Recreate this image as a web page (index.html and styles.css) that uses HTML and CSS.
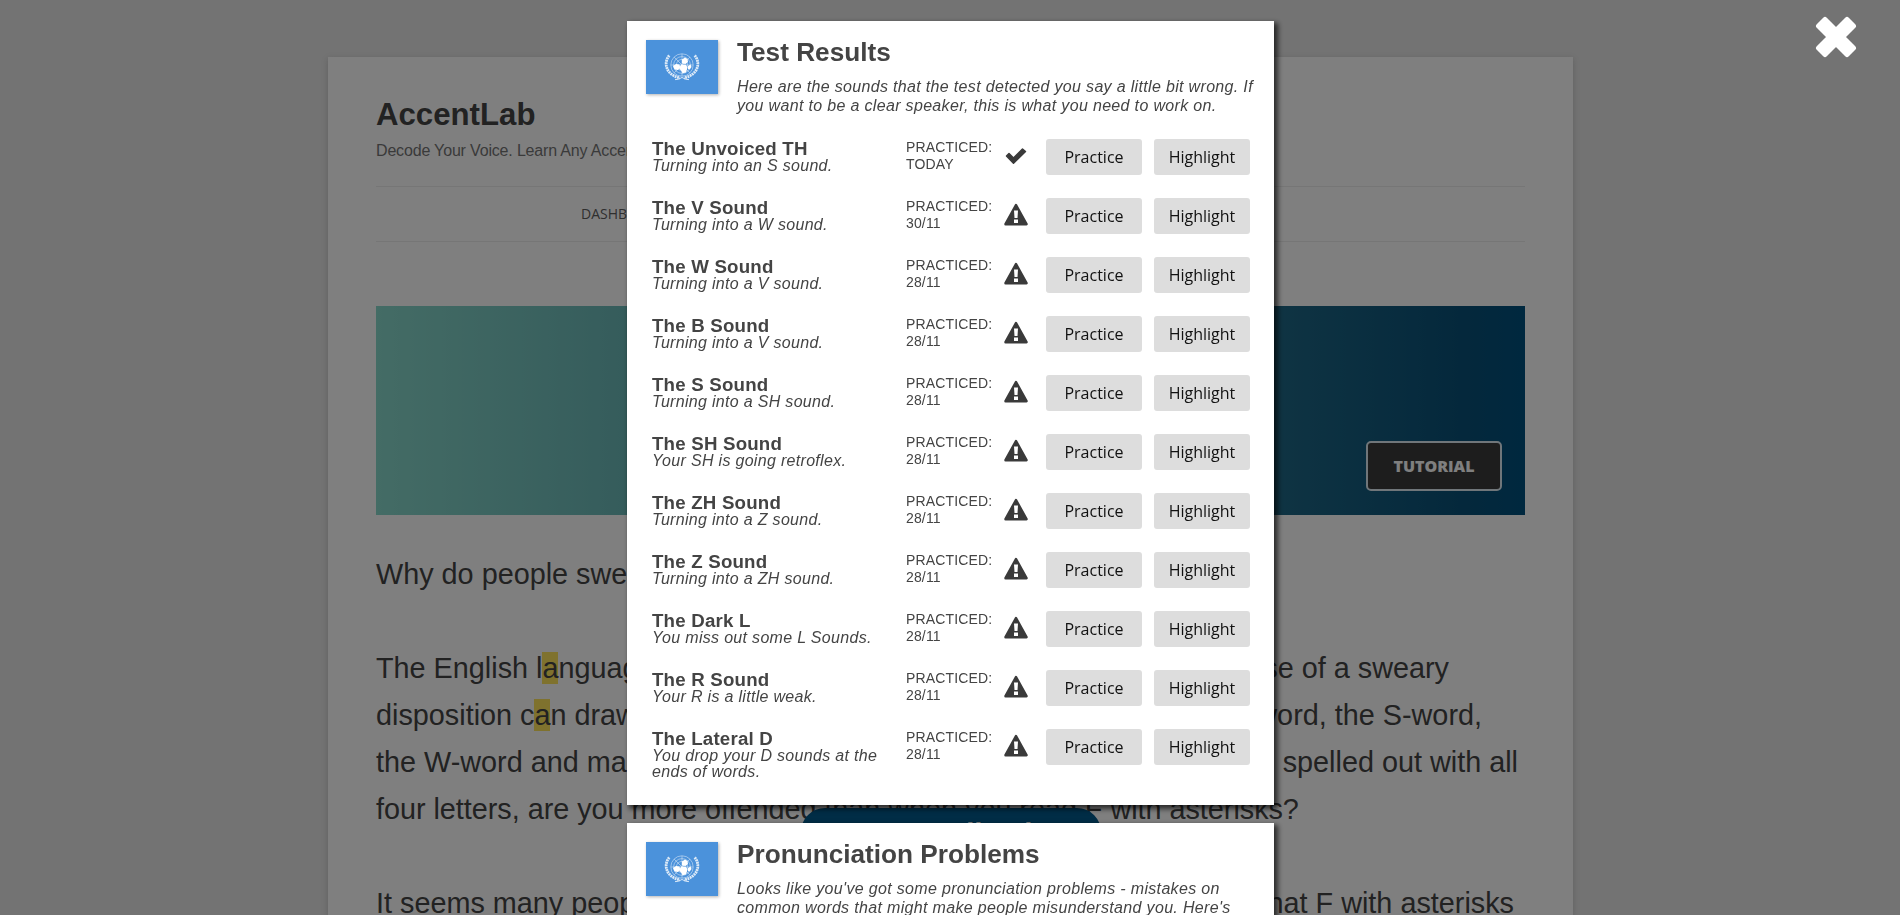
FILE: index.html
```
<!DOCTYPE html>
<html lang="en">
<head><meta charset="utf-8"><title>AccentLab</title><link rel="stylesheet" href="styles.css"></head>
<body>
<div class="page">
  <h1 class="site-title">AccentLab</h1>
  <p class="tagline">Decode Your Voice. Learn Any Accent.</p>
  <nav class="nav">DASHBOARD</nav>
  <section class="banner"><button class="tutorial">TUTORIAL</button></section>
  <article class="article">
    <p class="para">Why do people swear</p>
    <div class="para">
      <div class="line"><span>The English l<mark>a</mark>nguage</span><span class="end-sweary">se of a sweary</span></div>
      <div class="line"><span>disposition c<mark>a</mark>n draw</span><span class="end-sword">word, the S-word,</span></div>
      <div class="line"><span>the W-word and ma</span><span class="end-all">spelled out with all</span></div>
      <div class="line"><span class="full">four letters, are you more offended than when you read F with asterisks?</span></div>
    </div>
    <div class="para"><div class="line"><span>It seems many people</span><span class="end-asterisks">that F with asterisks</span></div></div>
  </article>
</div>
<button class="pill">Test Feedback</button>
<div class="overlay">
  <svg class="close" viewBox="0 0 42 42"><path d="M10 3.500 21 14.500 32 3.500 38.500 10 27.500 21 38.500 32 32 38.500 21 27.500 10 38.500 3.500 32 14.500 21 3.500 10z"/></svg>
  <section class="card">
    <header class="card-head">
      <svg class="flag"><use href="#flag"/></svg>
      <div><h2>Test Results</h2><p class="intro">Here are the sounds that the test detected you say a little bit wrong. If<br>you want to be a clear speaker, this is what you need to work on.</p></div>
    </header>
    <div class="rows" id="rows"></div>
  </section>
  <section class="card card-last">
    <header class="card-head">
      <svg class="flag"><use href="#flag"/></svg>
      <div><h2>Pronunciation Problems</h2><p class="intro">Looks like you've got some pronunciation problems - mistakes on<br>common words that might make people misunderstand you. Here's</p></div>
    </header>
  </section>
</div>
<svg class="defs">
  <symbol id="flag" viewBox="0 0 72 54">
    <rect width="72" height="54" fill="#4b92db"/>
    <g fill="none" stroke="#fff">
      <g stroke-width=".7" opacity=".65"><circle cx="36" cy="25" r="11.2"/><circle cx="36" cy="25" r="8.400"/><circle cx="36" cy="25" r="5.600"/><path d="M36 14v22M25 25h22M28.100 17.100l15.800 15.800M43.900 17.100 28.100 32.900"/></g>
      <g stroke-width="2.800" stroke-dasharray="1.900 .6" opacity=".8"><path d="M23.300 15.500C17.500 22 19 34.500 34 38"/><path d="M48.700 15.500C54.500 22 53 34.500 38 38"/></g>
      <path stroke-width=".9" opacity=".85" d="M29 39.600c3 0 5-.8 7-2.200 2 1.400 4 2.200 7 2.200"/>
    </g>
    <g fill="#fff"><path d="M36 19.500l3-2 2.500 1.500.5 3-2.500 2-3.500-.5z"/><path d="M27 26l3-2 3.500.5.800 3-2.300 2.500-3.500-.5z"/><path d="M35 24.500l5 .3 1.500 2.700-1.500 5-3.500.8-1.500-3-2-1.300z"/><path d="M42 26l2.500-1.500 1 2.500-1.800 2.500-1.700-.5z"/></g>
  </symbol>
  <symbol id="warn" viewBox="0 0 24 23"><path fill="#3a3a3a" stroke="#3a3a3a" stroke-width="2.500" stroke-linejoin="round" d="M12 2 22.500 21.200h-21z"/><path fill="#fff" d="M10 7.500h4l-.5 7.500h-3zM10 16.500h4v3.500h-4z"/></symbol>
  <symbol id="check" viewBox="0 0 24 23"><path fill="#3a3a3a" stroke="#3a3a3a" stroke-width="1.500" stroke-linejoin="round" d="M2.500 12 5 9.500l4.500 4.500L18.500 5 21.500 7.500 9.500 19.300z"/></symbol>
</svg>
<script src="rows.js"></script>
</body></html>
```
FILE: rows.js
```
const rows = [
  ["The Unvoiced TH", "Turning into an S sound.", "TODAY"],
  ["The V Sound", "Turning into a W sound.", "30/11"],
  ["The W Sound", "Turning into a V sound.", "28/11"],
  ["The B Sound", "Turning into a V sound.", "28/11"],
  ["The S Sound", "Turning into a SH sound.", "28/11"],
  ["The SH Sound", "Your SH is going retroflex.", "28/11"],
  ["The ZH Sound", "Turning into a Z sound.", "28/11"],
  ["The Z Sound", "Turning into a ZH sound.", "28/11"],
  ["The Dark L", "You miss out some L Sounds.", "28/11"],
  ["The R Sound", "Your R is a little weak.", "28/11"],
  ["The Lateral D", "You drop your D sounds at the<br>ends of words.", "28/11"]
];
document.getElementById("rows").innerHTML = rows.map(([name, note, date]) => `
  <div class="row">
    <div class="sound"><h3>${name}</h3><p>${note}</p></div>
    <div class="date">PRACTICED:<br>${date}</div>
    <svg class="status"><use href="#${date === "TODAY" ? "check" : "warn"}"/></svg>
    <button class="btn">Practice</button><button class="btn">Highlight</button>
  </div>`).join("");
```
FILE: styles.css
```
* { box-sizing: border-box; }
body { margin: 0; height: 915px; overflow: hidden; background: #e6e6e6; font-family: "Liberation Sans", Arial, sans-serif; color: #444; }
h1, h2, h3, p { margin: 0; }
.page { width: 1245px; height: 858px; overflow: hidden; margin: 57px 0 0 328px; padding: 38px 48px 0; background: #fff; box-shadow: 0 2px 6px rgba(100,100,100,.3); }
.site-title { font-size: 31.2px; line-height: 40px; }
.tagline { margin-top: 5px; font-size: 16px; line-height: 22px; letter-spacing: -.17px; color: #757575; white-space: nowrap; }
.nav { height: 56px; margin-top: 24px; padding-left: 205px; border: solid #ededed; border-width: 1px 0; font: 14px/54px "Open Sans", sans-serif; color: #5e5e5e; }
.banner { display: flex; justify-content: flex-end; align-items: flex-end; height: 209px; margin-top: 64px; padding: 0 23px 24px; background: linear-gradient(90deg, #88d8cb, #085078 95%, #00507e); }
.tutorial { width: 136px; height: 50px; padding: 0 0 1px; border: 2px solid #e0edf5; border-radius: 5px; background: #3a3a3a; color: #fff; font: 800 16px "Open Sans", sans-serif; }
.article { padding-top: 36px; font-size: 28.8px; line-height: 47px; color: #444; }
.para { margin-bottom: 47px; white-space: nowrap; }
.line { display: flex; justify-content: space-between; height: 47px; }
.full { letter-spacing: -.025px; }
mark { background: #ffe45c; color: inherit; }
.end-sweary { padding-right: 76px; }
.end-sword { padding-right: 43px; }
.end-all { padding-right: 7px; }
.end-asterisks { padding-right: 11px; }
.pill { position: fixed; left: 801px; top: 808px; width: 300px; height: 60px; border: 0; border-radius: 24px; background: #005a8c; color: #fff; font: 700 29px/34px "Liberation Sans", sans-serif; padding: 0 0 9px 40px; text-align: left; }
.overlay { position: fixed; inset: 0; overflow: hidden; padding: 21px 0 0 627px; background: rgba(0,0,0,.5); }
.close { position: absolute; left: 1815px; top: 16px; width: 42px; height: 42px; fill: #fff; stroke: #fff; stroke-width: 5; stroke-linejoin: round; }
.card { width: 647px; height: 784px; margin-bottom: 18px; padding: 19px; background: #fff; box-shadow: 3px 3px 5px 1px rgba(0,0,0,.65); }
.card-last { height: 92px; margin-bottom: 0; }
.card-head { display: flex; gap: 19px; }
.flag { flex: none; width: 72px; height: 54px; box-shadow: 1px 1px 3px rgba(0,0,0,.3); }
.card h2 { margin: -3px 0 0; font-size: 26.2px; line-height: 30px; white-space: nowrap; }
.intro { margin-top: 10px; font-size: 16px; line-height: 19px; font-style: italic; letter-spacing: .33px; white-space: nowrap; }
.rows { margin-top: 24px; padding-left: 6px; }
.row { display: flex; height: 59px; }
.row > * { flex: none; }
.sound { width: 254px; padding-top: 1px; white-space: nowrap; }
.sound h3 { font-size: 18.7px; line-height: 18px; letter-spacing: .2px; }
.sound p { font-size: 16px; line-height: 16px; font-style: italic; letter-spacing: .31px; }
.date { width: 98px; font-size: 14px; line-height: 17px; letter-spacing: .15px; }
.status { width: 24px; height: 23px; margin: 5px 18px 0 0; }
.btn { width: 96px; height: 36px; margin-right: 12px; padding: 0; border: 0; border-radius: 3px; background: #ddd; color: #111; font: 16px "Open Sans", sans-serif; }
.btn:last-child { margin-right: 0; }
.defs { display: none; }
```
